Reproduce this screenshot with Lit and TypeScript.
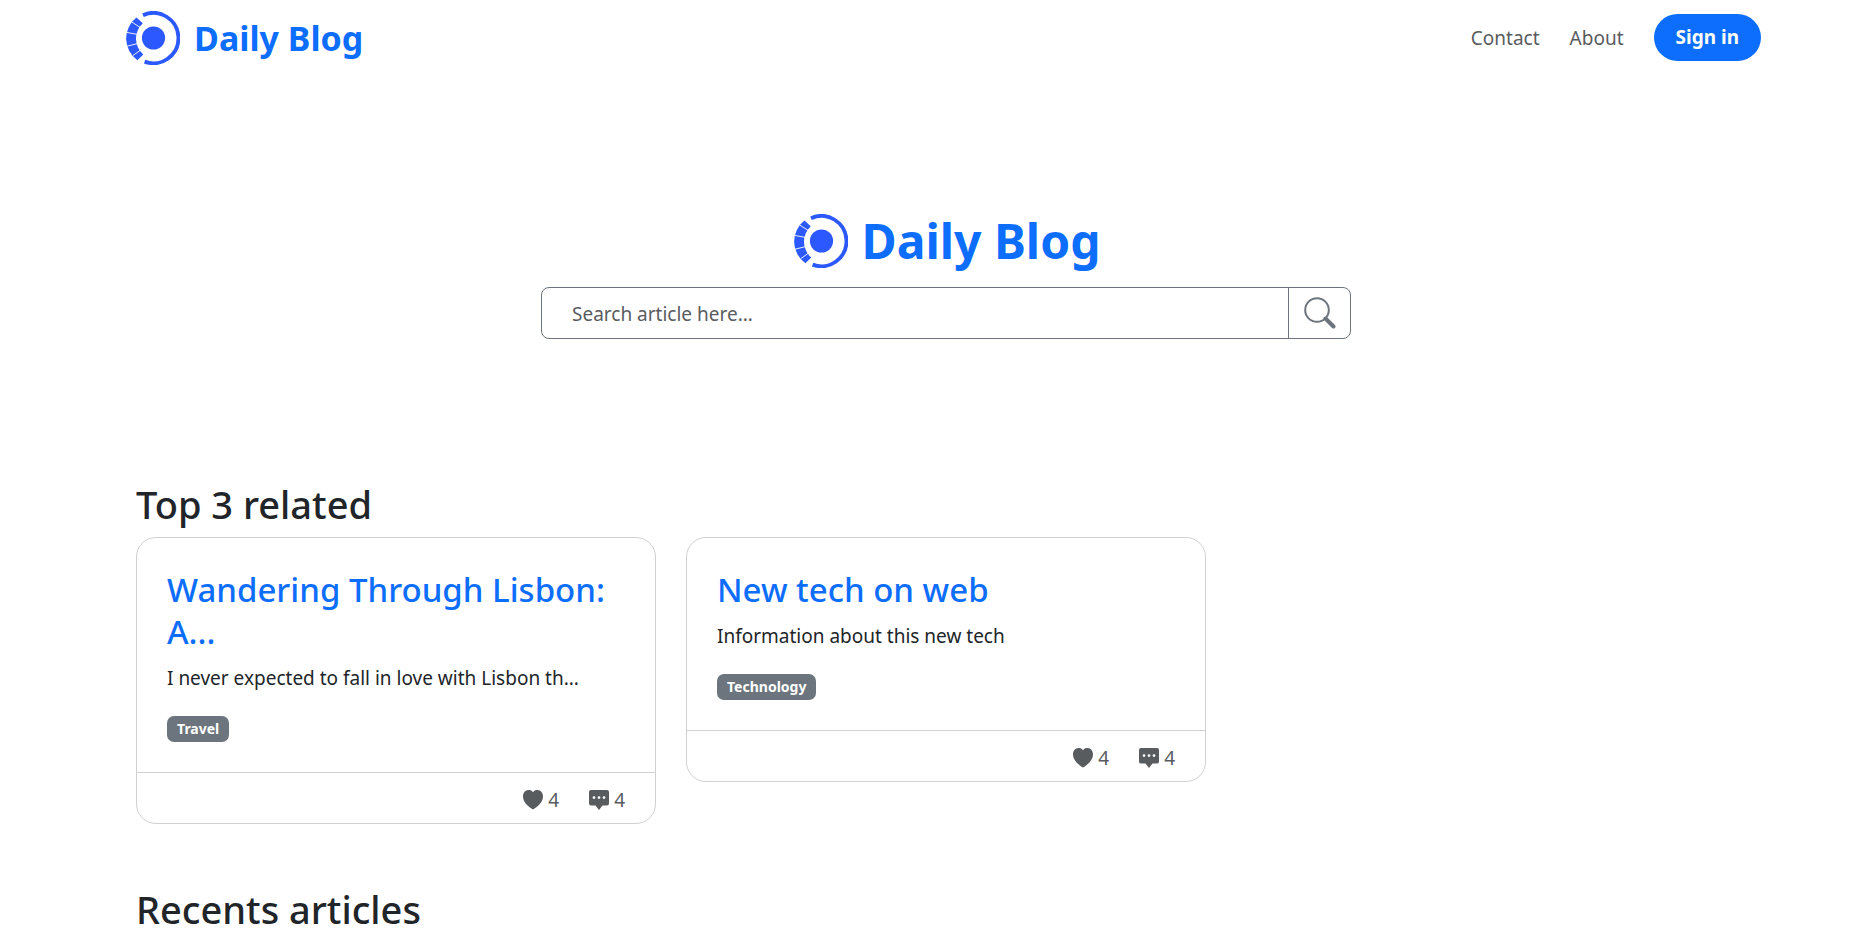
import { LitElement, html, css, svg } from "lit";
import { customElement, property } from "lit/decorators.js";

interface Article {
  title: string;
  summary: string;
  tag: string;
  likes: number;
  comments: number;
}

const articles: Article[] = [
  {
    title: "Wandering Through Lisbon: A...",
    summary: "I never expected to fall in love with Lisbon th...",
    tag: "Travel",
    likes: 4,
    comments: 4,
  },
  {
    title: "New tech on web",
    summary: "Information about this new tech",
    tag: "Technology",
    likes: 4,
    comments: 4,
  },
];

/* Open ring, segmented band on the left and a solid core. */
const logo = html`<svg class="logo" viewBox="0 0 54 54" width="54" height="54" aria-hidden="true">
  ${svg`
    <circle cx="27.5" cy="27" r="11.6" fill="#2b59ff" />
    <path d="M17 4.2A25.1 25.1 0 1 1 18.6 50.6" fill="none" stroke="#2b59ff" stroke-width="3.8" />
    <path d="M10.4 6.6L16.8 12.2A21 21 0 0 0 17.3 43.6L11.4 49.2A26.5 26.5 0 0 1 10.4 6.6Z" fill="#2b59ff" />
    <path d="M5 10.5L15 17M0 21.3L12 23.5M1 35.2L12 32.5M7 44.5L16 38" stroke="#fff" stroke-width=".9" />
  `}
</svg>`;

@customElement("article-card")
export class ArticleCard extends LitElement {
  @property({ attribute: false }) article!: Article;

  static styles = css`
    :host {
      display: block;
    }
    .card {
      border: 1px solid #d0d1d2;
      border-radius: 20px;
      background: #fff;
    }
    .body {
      padding: 31px 30px 30px;
    }
    .title {
      margin: 0 0 10px;
      font-size: 33px;
      line-height: 42px;
      font-weight: 500;
    }
    .title a {
      color: #0d6efd;
      text-decoration: none;
    }
    .summary {
      margin: 0 0 23px;
      line-height: 30px;
    }
    .tag {
      display: block;
      width: fit-content;
      padding: 0 10px;
      border-radius: 7px;
      background: #6c757d;
      color: #fff;
      font-size: 14px;
      line-height: 26px;
      font-weight: 700;
    }
    .footer {
      display: flex;
      justify-content: flex-end;
      gap: 30px;
      padding: 12px 30px 8px;
      border-top: 1px solid #d0d1d2;
      color: #595c5f;
      line-height: 30px;
    }
    .stat {
      display: flex;
      align-items: center;
      gap: 5px;
    }
    .icon {
      fill: #595c5f;
    }
  `;

  render() {
    const a = this.article;
    return html`<article class="card">
      <div class="body">
        <h3 class="title"><a href="#">${a.title}</a></h3>
        <p class="summary">${a.summary}</p>
        <span class="tag">${a.tag}</span>
      </div>
      <div class="footer">
        <span class="stat">
          <svg class="icon" viewBox="0 0 20 20" width="20" height="20" role="img" aria-label="Likes">
            <path d="M10 2.2C8.6 .2 6.8 0 5.5 0C2 .2 0 3 0 6.5C0 12 5 16.5 10 19.6C15 16.5 20 12 20 6.5C20 3 18 .2 14.5 0C13.2 0 11.4 .2 10 2.2Z" />
          </svg>
          ${a.likes}
        </span>
        <span class="stat">
          <svg class="icon" viewBox="0 0 20 20" width="20" height="20" role="img" aria-label="Comments">
            <path fill-rule="evenodd" d="M2 0H18A2 2 0 0 1 20 2V13.5A2 2 0 0 1 18 15.5H13.5L10 20L6.5 15.5H2A2 2 0 0 1 0 13.5V2A2 2 0 0 1 2 0ZM5 6.2A1.4 1.4 0 1 0 5 9A1.4 1.4 0 1 0 5 6.2ZM10 6.2A1.4 1.4 0 1 0 10 9A1.4 1.4 0 1 0 10 6.2ZM15 6.2A1.4 1.4 0 1 0 15 9A1.4 1.4 0 1 0 15 6.2Z" />
          </svg>
          ${a.comments}
        </span>
      </div>
    </article>`;
  }
}

@customElement("app-root")
export class AppRoot extends LitElement {
  static styles = css`
    :host {
      display: block;
      height: 100vh;
      overflow: hidden;
      box-sizing: border-box;
      padding-left: 18px;
      background: #fff;
      color: #212529;
      font-family: "Noto Sans", "Open Sans", sans-serif;
      font-size: 19px;
    }
    .container {
      box-sizing: border-box;
      max-width: 1650px;
      margin: 0 auto;
      padding: 0 15px;
    }
    .nav {
      display: flex;
      align-items: center;
      justify-content: space-between;
      box-sizing: border-box;
      max-width: 1650px;
      height: 75px;
      margin: 0 auto;
      padding: 0 10px 0 5px;
    }
    .brand {
      display: flex;
      align-items: center;
      gap: 14px;
      color: #0d6efd;
      font-size: 34px;
      line-height: 54px;
      font-weight: 700;
      text-decoration: none;
    }
    .links {
      display: flex;
      align-items: center;
      gap: 30px;
    }
    .link {
      color: #595c5f;
      line-height: 30px;
      text-decoration: none;
    }
    .signin {
      padding: 0 22px;
      border: 0;
      border-radius: 24px;
      background: #0d6efd;
      color: #fff;
      font: inherit;
      line-height: 47px;
      font-weight: 700;
    }
    .hero {
      display: flex;
      flex-direction: column;
      align-items: center;
      padding: 124px 15px 140px;
    }
    .hero-title {
      display: flex;
      align-items: center;
      gap: 14px;
      margin: 0 0 4px;
      padding-left: 2px;
      color: #0d6efd;
      font-size: 48px;
      line-height: 84px;
      font-weight: 700;
    }
    .logo {
      flex: none;
    }
    .search {
      display: flex;
      box-sizing: border-box;
      width: 810px;
      max-width: 100%;
      height: 52px;
      border: 1px solid #6c757d;
      border-radius: 8px;
    }
    .field {
      flex: 1;
      min-width: 0;
      padding: 2px 30px 0;
      border: 0;
      background: none;
      color: #212529;
      font: inherit;
      outline: 0;
    }
    .field::placeholder {
      color: #595c5f;
      opacity: 1;
    }
    .submit {
      display: flex;
      align-items: center;
      padding: 0 14px 0 15px;
      border: 0;
      border-left: 1px solid #6c757d;
      background: none;
    }
    .heading {
      margin: 0 0 8px;
      font-size: 38px;
      line-height: 50px;
      font-weight: 500;
    }
    .grid {
      display: grid;
      grid-template-columns: repeat(3, minmax(0, 1fr));
      align-items: start;
      gap: 30px;
      margin-bottom: 60px;
    }
  `;

  render() {
    return html`
      <header class="nav">
        <a class="brand" href="#">${logo}<span>Daily Blog</span></a>
        <nav class="links">
          <a class="link" href="#">Contact</a>
          <a class="link" href="#">About</a>
          <button class="signin" type="button">Sign in</button>
        </nav>
      </header>
      <main>
        <section class="hero">
          <h1 class="hero-title">${logo}<span>Daily Blog</span></h1>
          <form class="search" role="search" @submit=${(e: Event) => e.preventDefault()}>
            <input class="field" type="text" placeholder="Search article here..." aria-label="Search article" />
            <button class="submit" type="submit" aria-label="Search">
              <svg viewBox="0 0 32 32" width="32" height="32" aria-hidden="true">
                <circle cx="13" cy="13" r="11.8" fill="none" stroke="#6c757d" stroke-width="2" />
                <path d="M21.5 21.5L29.5 29.5" stroke="#6c757d" stroke-width="4" stroke-linecap="round" />
              </svg>
            </button>
          </form>
        </section>
        <section class="container">
          <h2 class="heading">Top 3 related</h2>
          <div class="grid">
            ${articles.map((a) => html`<article-card .article=${a}></article-card>`)}
          </div>
        </section>
        <section class="container">
          <h2 class="heading">Recents articles</h2>
        </section>
      </main>
    `;
  }
}
